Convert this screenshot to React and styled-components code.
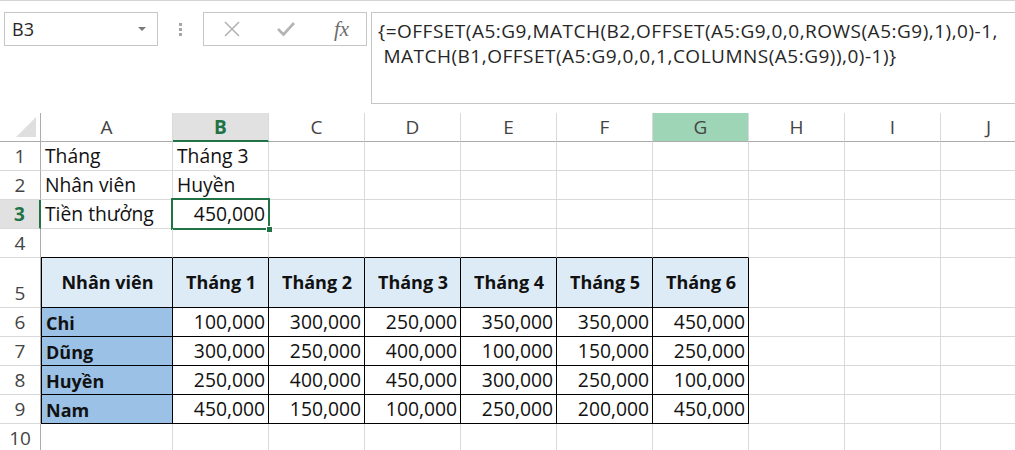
import React from 'react';
import styled, { createGlobalStyle, css } from 'styled-components';

const GlobalStyle = createGlobalStyle`
	html, body {
		margin: 0;
		padding: 0;
		background: #fff;
	}
	body {
		font-family: 'Open Sans', 'Liberation Sans', sans-serif;
		color: #111;
		overflow: hidden;
	}
`;

const GREEN = '#217346';
const GRID = '#d9d9d9';

const Page = styled.div`
	width: 1015px;
	height: 450px;
	overflow: hidden;
`;

const FormulaBar = styled.div`
	display: flex;
	align-items: flex-start;
	height: 113px;
	box-sizing: border-box;
	padding: 11px 0 0 4px;
	border-top: 1px solid #d5d5d5;
`;

const NameBox = styled.div`
	display: flex;
	align-items: center;
	justify-content: space-between;
	width: 154px;
	height: 34px;
	box-sizing: border-box;
	border: 1px solid #c6c6c6;
	padding: 0 11px 0 7px;
	font-size: 18px;
	color: #262626;
`;

const Caret = styled.span`
	width: 0;
	height: 0;
	border-left: 4px solid transparent;
	border-right: 4px solid transparent;
	border-top: 4px solid #7a7a7a;
`;

const Grip = styled.div`
	display: flex;
	flex-direction: column;
	gap: 2px;
	width: 45px;
	align-items: center;
	padding-top: 11px;
	span {
		width: 3px;
		height: 3px;
		background: #a6a6a6;
	}
`;

const FxBox = styled.div`
	display: flex;
	align-items: center;
	width: 164px;
	height: 34px;
	box-sizing: border-box;
	border: 1px solid #c6c6c6;
	padding-left: 19px;
	gap: 35px;
`;

const FxLabel = styled.span`
	font-family: 'Liberation Serif', 'DejaVu Serif', serif;
	font-style: italic;
	font-size: 21px;
	color: #6d6d6d;
	margin-left: 3px;
`;

const FormulaInput = styled.div`
	flex: 1;
	margin-left: 4px;
	height: 92px;
	box-sizing: border-box;
	border: 1px solid #c6c6c6;
	border-right: none;
	padding: 6px 0 0 6px;
	font-size: 19px;
	letter-spacing: 0.5px;
	line-height: 25px;
	color: #262626;
	white-space: pre;
`;

const Sheet = styled.div`
	display: grid;
	grid-template-columns: 41px 132px repeat(9, 96px);
	grid-template-rows: 29px 29px 29px 29px 29px 50px 29px 29px 29px 29px 29px;
`;

const Corner = styled.div`
	position: relative;
	box-sizing: border-box;
	border-right: 1px solid #ababab;
	border-bottom: 1px solid #ababab;
	&::after {
		content: '';
		position: absolute;
		right: 4px;
		bottom: 4px;
		width: 0;
		height: 0;
		border-left: 20px solid transparent;
		border-bottom: 20px solid #dfdfdf;
	}
`;

const ColHeader = styled.div`
	display: flex;
	align-items: center;
	justify-content: center;
	box-sizing: border-box;
	border-right: 1px solid ${GRID};
	border-bottom: 1px solid #ababab;
	font-size: 19px;
	color: #444;
	${p => p.$active && css`
		background: #e1e1e1;
		color: ${GREEN};
		font-weight: 700;
		border-bottom: 2px solid ${GREEN};
	`}
	${p => p.$hover && css`
		background: #9fd5b7;
	`}
`;

const RowHeader = styled.div`
	display: flex;
	align-items: flex-end;
	justify-content: center;
	box-sizing: border-box;
	padding-bottom: 1px;
	border-right: 1px solid #ababab;
	border-bottom: 1px solid ${GRID};
	font-size: 19px;
	color: #444;
	${p => p.$active && css`
		background: #e1e1e1;
		color: ${GREEN};
		font-weight: 700;
		border-right: 2px solid ${GREEN};
	`}
`;

const Cell = styled.div`
	position: relative;
	display: flex;
	align-items: ${p => (p.$middle ? 'center' : 'flex-end')};
	justify-content: ${p => p.$align || 'flex-start'};
	box-sizing: border-box;
	padding: 0 3px 1px 4px;
	border-right: 1px solid ${p => (p.$table ? '#000' : GRID)};
	border-bottom: 1px solid ${p => (p.$table || p.$above ? '#000' : GRID)};
	border-left: ${p => (p.$first ? '1px solid #000' : 'none')};
	background: ${p => p.$bg || 'transparent'};
	font-size: ${p => (p.$bold ? 18 : 19.3)}px;
	font-weight: ${p => (p.$bold ? 700 : 400)};
	white-space: nowrap;
	${p => p.$selected && css`
		&::after {
			content: '';
			position: absolute;
			left: -2px;
			top: -2px;
			right: -2px;
			bottom: -2px;
			border: 2px solid ${GREEN};
		}
		&::before {
			content: '';
			position: absolute;
			right: -5px;
			bottom: -5px;
			width: 5px;
			height: 5px;
			background: ${GREEN};
			border: 1px solid #fff;
			z-index: 2;
		}
	`}
`;

const cols = ['A', 'B', 'C', 'D', 'E', 'F', 'G', 'H', 'I', 'J'];

const data = [
	['Chi', '100,000', '300,000', '250,000', '350,000', '350,000', '450,000'],
	['Dũng', '300,000', '250,000', '400,000', '100,000', '150,000', '250,000'],
	['Huyền', '250,000', '400,000', '450,000', '300,000', '250,000', '100,000'],
	['Nam', '450,000', '150,000', '100,000', '250,000', '200,000', '450,000']
];

const top = [
	['Tháng', 'Tháng 3'],
	['Nhân viên', 'Huyền'],
	['Tiền thưởng', '450,000']
];

const Cross = () => (
	<svg width="18" height="18" viewBox="0 0 18 18">
		<path d="M2 2 L16 16 M16 2 L2 16" stroke="#b4b4b4" strokeWidth="1.6" fill="none" />
	</svg>
);

const Check = () => (
	<svg width="20" height="18" viewBox="0 0 20 18">
		<path d="M2 9 L7.5 14.5 L18 3" stroke="#b4b4b4" strokeWidth="2.6" fill="none" />
	</svg>
);

const emptyRow = (from) => cols.slice(from).map(c => <Cell key={c} />);

const App = () => (
	<Page>
		<GlobalStyle />
		<FormulaBar>
			<NameBox>
				B3
				<Caret />
			</NameBox>
			<Grip>
				<span />
				<span />
				<span />
			</Grip>
			<FxBox>
				<Cross />
				<Check />
				<FxLabel>fx</FxLabel>
			</FxBox>
			<FormulaInput>
				{'{=OFFSET(A5:G9,MATCH(B2,OFFSET(A5:G9,0,0,ROWS(A5:G9),1),0)-1,\n MATCH(B1,OFFSET(A5:G9,0,0,1,COLUMNS(A5:G9)),0)-1)}'}
			</FormulaInput>
		</FormulaBar>

		<Sheet>
			<Corner />
			{cols.map(c => (
				<ColHeader key={c} $active={c === 'B'} $hover={c === 'G'}>{c}</ColHeader>
			))}

			{top.map(([label, value], i) => (
				<React.Fragment key={label}>
					<RowHeader $active={i === 2}>{i + 1}</RowHeader>
					<Cell>{label}</Cell>
					<Cell $selected={i === 2} $align={i === 2 ? 'flex-end' : 'flex-start'}>{value}</Cell>
					{emptyRow(2)}
				</React.Fragment>
			))}

			<RowHeader>4</RowHeader>
			{cols.map((c, i) => <Cell key={c} $above={i < 7} />)}

			<RowHeader>5</RowHeader>
			{['Nhân viên', 'Tháng 1', 'Tháng 2', 'Tháng 3', 'Tháng 4', 'Tháng 5', 'Tháng 6'].map((h, i) => (
				<Cell key={h} $table $first={i === 0} $middle $align="center" $bold $bg="#ddebf7">{h}</Cell>
			))}
			{emptyRow(7)}

			{data.map((row, r) => (
				<React.Fragment key={row[0]}>
					<RowHeader>{r + 6}</RowHeader>
					{row.map((v, i) => (
						<Cell
							key={i}
							$table
							$first={i === 0}
							$bold={i === 0}
							$bg={i === 0 ? '#9bc2e6' : undefined}
							$align={i === 0 ? 'flex-start' : 'flex-end'}
						>
							{v}
						</Cell>
					))}
					{emptyRow(7)}
				</React.Fragment>
			))}

			<RowHeader>10</RowHeader>
			{emptyRow(0)}
		</Sheet>
	</Page>
);

export default App;
